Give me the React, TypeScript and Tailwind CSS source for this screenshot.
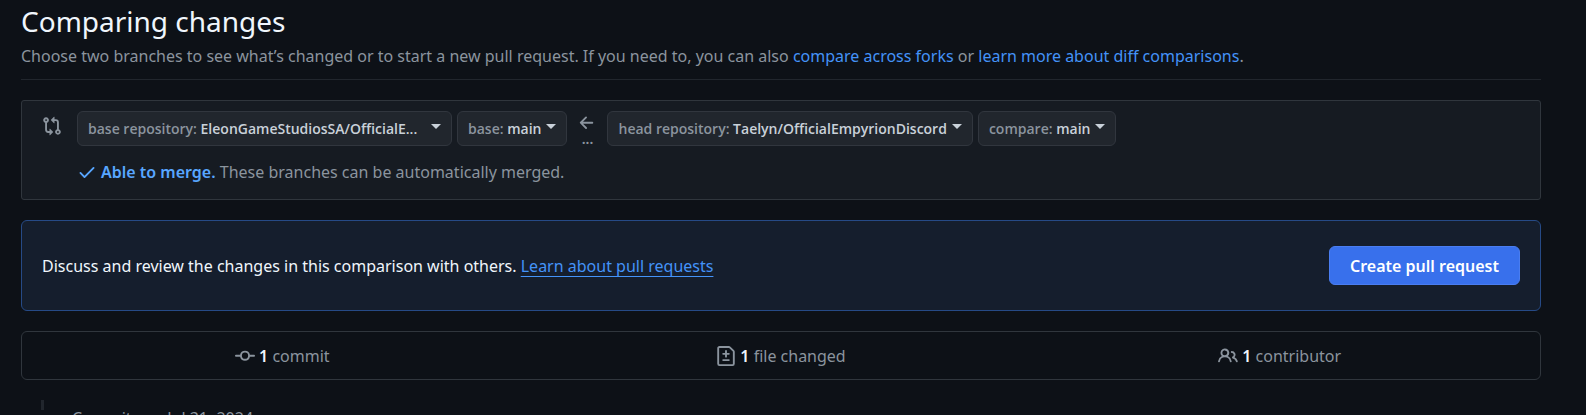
import type { ReactNode } from "react";

const icons = {
  compare:
    "M9.573.677A.25.25 0 0 1 10 .854V2.5h1A2.5 2.5 0 0 1 13.5 5v5.628a2.251 2.251 0 1 1-1.5 0V5a1 1 0 0 0-1-1h-1v1.646a.25.25 0 0 1-.427.177L7.177 3.427a.25.25 0 0 1 0-.354L9.573.677ZM6 12v-1.646a.25.25 0 0 1 .427-.177l2.396 2.396a.25.25 0 0 1 0 .354l-2.396 2.396A.25.25 0 0 1 6 15.146V13.5H5A2.5 2.5 0 0 1 2.5 11V5.372a2.25 2.25 0 1 1 1.5 0V11a1 1 0 0 0 1 1h1ZM4 3.25a.75.75 0 1 0-1.5 0 .75.75 0 0 0 1.5 0ZM12.75 12a.75.75 0 1 0 0 1.5.75.75 0 0 0 0-1.5Z",
  check:
    "M13.78 4.22a.75.75 0 0 1 0 1.06l-7.25 7.25a.75.75 0 0 1-1.06 0L2.22 9.28a.751.751 0 0 1 .018-1.042.751.751 0 0 1 1.042-.018L6 10.94l6.72-6.72a.75.75 0 0 1 1.06 0Z",
  arrowLeft:
    "M7.78 12.53a.75.75 0 0 1-1.06 0L2.47 8.28a.75.75 0 0 1 0-1.06l4.25-4.25a.751.751 0 0 1 1.042.018.751.751 0 0 1 .018 1.042L4.81 7h7.44a.75.75 0 0 1 0 1.5H4.81l2.97 2.97a.75.75 0 0 1 0 1.06Z",
  commit:
    "M11.93 8.5a4.002 4.002 0 0 1-7.86 0H.75a.75.75 0 0 1 0-1.5h3.32a4.002 4.002 0 0 1 7.86 0h3.32a.75.75 0 0 1 0 1.5Zm-1.43-.75a2.5 2.5 0 1 0-5 0 2.5 2.5 0 0 0 5 0Z",
  fileDiff:
    "M1 1.75C1 .784 1.784 0 2.75 0h7.586c.464 0 .909.184 1.237.513l2.914 2.914c.329.328.513.773.513 1.237v9.586A1.75 1.75 0 0 1 13.25 16H2.75A1.75 1.75 0 0 1 1 14.25Zm1.75-.25a.25.25 0 0 0-.25.25v12.5c0 .138.112.25.25.25h10.5a.25.25 0 0 0 .25-.25V4.664a.25.25 0 0 0-.073-.177l-2.914-2.914a.25.25 0 0 0-.177-.073ZM8 3.25a.75.75 0 0 1 .75.75v1.5h1.5a.75.75 0 0 1 0 1.5h-1.5v1.5a.75.75 0 0 1-1.5 0V7h-1.5a.75.75 0 0 1 0-1.5h1.5V4A.75.75 0 0 1 8 3.25Zm-3 8a.75.75 0 0 1 .75-.75h4.5a.75.75 0 0 1 0 1.5h-4.5a.75.75 0 0 1-.75-.75Z",
  people:
    "M2 5.5a3.5 3.5 0 1 1 5.898 2.549 5.508 5.508 0 0 1 3.034 4.084.75.75 0 1 1-1.482.235 4 4 0 0 0-7.9 0 .75.75 0 0 1-1.482-.236A5.507 5.507 0 0 1 3.102 8.05 3.493 3.493 0 0 1 2 5.5ZM11 4a3.001 3.001 0 0 1 2.22 5.018 5.01 5.01 0 0 1 2.56 3.012.749.749 0 0 1-.885.954.752.752 0 0 1-.549-.514 3.507 3.507 0 0 0-2.522-2.372.75.75 0 0 1-.574-.73v-.352a.75.75 0 0 1 .416-.672A1.5 1.5 0 0 0 11 5.5.75.75 0 0 1 11 4Zm-5.5-.5a2 2 0 1 0-.001 3.999A2 2 0 0 0 5.5 3.5Z",
};

function Icon({ name, className = "" }: { name: keyof typeof icons; className?: string }) {
  return (
    <svg viewBox="0 0 16 16" aria-hidden="true" className={`size-5 shrink-0 fill-current ${className}`}>
      <path d={icons[name]} />
    </svg>
  );
}

function Picker({ label, value, wide = false }: { label: string; value: string; wide?: boolean }) {
  return (
    <button
      type="button"
      className={`flex h-[35px] items-center rounded-md border border-[#31363e] bg-[#21262d] px-2.5 font-['Open_Sans',sans-serif] text-sm font-semibold text-[#c9d1d9] ${wide ? "w-[375px] justify-between" : ""}`}
    >
      <span className="whitespace-nowrap">
        <span className="text-[#8b949e]">{label}:</span> {value}
      </span>
      <svg viewBox="0 0 10 5" aria-hidden="true" className="mb-1 ml-[5px] h-[5px] w-2.5 shrink-0 fill-current">
        <path d="M0 0h10L5 5z" />
      </svg>
    </button>
  );
}

function Stat({ icon, count, children }: { icon: keyof typeof icons; count: number; children: ReactNode }) {
  return (
    <li className="flex flex-1 items-center justify-center">
      <Icon name={icon} className="mr-1" />
      <span>
        <strong className="font-semibold text-[#f0f6fc]">{count}</strong> {children}
      </span>
    </li>
  );
}

export default function App() {
  return (
    <main className="h-screen overflow-hidden bg-[#0d1117] pr-[45px] pl-[21px] font-['Noto_Sans',sans-serif] text-base leading-6 text-[#8b949e]">
      <header className="border-b border-[#21262d] pt-[3px] pb-[11px]">
        <h1 className="text-[28px] leading-9 text-[#f0f6fc]">Comparing changes</h1>
        <p className="pt-[5px]">
          Choose two branches to see what’s changed or to start a new pull request. If you need to, you can also{" "}
          <a href="#forks" className="text-[#4493f8]">compare across forks</a> or{" "}
          <a href="#diffs" className="text-[#4493f8]">learn more about diff comparisons</a>.
        </p>
      </header>

      <section className="mt-5 flex rounded-[3px] border border-[#30363d] bg-[#161b22] pt-2.5 pb-[15px] pl-5">
        <Icon name="compare" className="mt-[5px] mr-[15px]" />
        <div>
          <div className="flex items-start">
            <div className="flex gap-[5px]">
              <Picker label="base repository" value="EleonGameStudiosSA/OfficialE..." wide />
              <Picker label="base" value="main" />
            </div>
            <span className="flex w-10 flex-col items-center">
              <Icon name="arrowLeft" className="mt-0.5" />
              <span className="text-sm leading-[11px] font-semibold">...</span>
            </span>
            <div className="flex gap-[5px]">
              <Picker label="head repository" value="Taelyn/OfficialEmpyrionDiscord" />
              <Picker label="compare" value="main" />
            </div>
          </div>
          <p className="mt-[14px] flex items-center">
            <Icon name="check" className="mr-1 text-[#58a6ff]" />
            <span>
              <strong className="font-semibold text-[#58a6ff]">Able to merge.</strong> These branches can be
              automatically merged.
            </span>
          </p>
        </div>
      </section>

      <section className="mt-5 flex items-center justify-between rounded-md border border-[#264a86] bg-[#151e2d] px-5 py-[25px]">
        <p className="text-[#f0f6fc]">
          Discuss and review the changes in this comparison with others.{" "}
          <a href="#learn" className="text-[#4493f8] underline underline-offset-4">Learn about pull requests</a>
        </p>
        <button
          type="button"
          className="h-[39px] rounded-md border border-[#4a7df0] bg-[#3870ec] px-5 font-semibold text-white"
        >
          Create pull request
        </button>
      </section>

      <ul className="mt-5 flex items-center rounded-md border border-[#30363d] px-[11px] pt-3 pb-[11px]">
        <Stat icon="commit" count={1}>commit</Stat>
        <Stat icon="fileDiff" count={1}>file changed</Stat>
        <Stat icon="people" count={1}>contributor</Stat>
      </ul>

      <section className="mt-5 flex pl-5">
        <span className="h-2.5 w-[3px] bg-[#21262d]" />
        <h2 className="pt-1.5 pl-7">Commits on Jul 31, 2024</h2>
      </section>
    </main>
  );
}
